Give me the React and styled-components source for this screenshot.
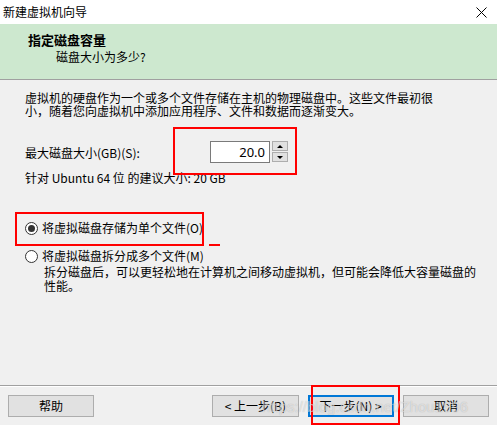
import React from 'react';
import styled, { createGlobalStyle } from 'styled-components';

const GlobalStyle = createGlobalStyle`
  html, body {
    margin: 0;
    padding: 0;
    background: #f0f0f0;
  }
  body {
    font-family: "Noto Sans CJK SC", "Liberation Sans", sans-serif;
    font-size: 12px;
    color: #000;
  }
`;

const Window = styled.div`
  position: relative;
  width: 497px;
  height: 425px;
  display: flex;
  flex-direction: column;
  background: #f0f0f0;
  overflow: hidden;
`;

const TitleBar = styled.div`
  height: 24px;
  flex: none;
  display: flex;
  align-items: center;
  justify-content: space-between;
  padding: 0 10px 0 3px;
  background: #fff;
  line-height: 24px;
`;

const Header = styled.div`
  height: 56px;
  flex: none;
  background: #cde8cf;
  border-bottom: 1px solid #a0a0a0;
  padding: 9px 0 0 28px;
  box-sizing: border-box;
`;

const HeaderTitle = styled.div`
  font-weight: bold;
  font-size: 13px;
  line-height: 13px;
`;

const HeaderSub = styled.div`
  margin: 4px 0 0 28px;
  line-height: 13px;
`;

const Body = styled.div`
  flex: 1;
  padding: 11px 0 0 25px;
`;

const Line = styled.div`
  line-height: ${p => p.$lh || 13}px;
  white-space: nowrap;
`;

const SizeRow = styled.div`
  display: flex;
  align-items: center;
  margin-top: 24px;
  height: 22px;
`;

const Label = styled.span`
  width: 185px;
  line-height: 13px;
`;

const Spin = styled.div`
  display: flex;
  height: 22px;
`;

const NumBox = styled.div`
  width: 60px;
  box-sizing: border-box;
  border: 1px solid #7a7a7a;
  background: #fff;
  text-align: right;
  padding-right: 4px;
  font-size: 13px;
  line-height: 20px;
  font-family: "Noto Sans", "Liberation Sans", sans-serif;
`;

const Arrows = styled.div`
  display: flex;
  flex-direction: column;
  gap: 1px;
  margin-left: 2px;
`;

const Arrow = styled.div`
  width: 16px;
  height: 10px;
  box-sizing: border-box;
  border: 1px solid #adadad;
  background: #e1e1e1;
  display: flex;
  align-items: center;
  justify-content: center;
`;

const Tri = styled.div`
  width: 0;
  height: 0;
  border-left: 3px solid transparent;
  border-right: 3px solid transparent;
  ${p => (p.$up ? 'border-bottom: 3px solid #000;' : 'border-top: 3px solid #000;')}
`;

const Hint = styled(Line)`
  margin-top: 8px;
`;

const RadioRow = styled.div`
  display: flex;
  align-items: center;
  gap: 4px;
  height: 16px;
  margin-top: ${p => p.$mt}px;
  line-height: 16px;
`;

const RadioDot = styled.span`
  width: 13px;
  height: 13px;
  box-sizing: border-box;
  border-radius: 50%;
  border: 1px solid #333;
  background: #fff;
  display: flex;
  align-items: center;
  justify-content: center;
  &::after {
    content: '';
    width: 7px;
    height: 7px;
    border-radius: 50%;
    background: ${p => (p.$checked ? '#333' : 'transparent')};
  }
`;

const Desc = styled.div`
  margin: 1px 0 0 19px;
`;

const Footer = styled.div`
  flex: none;
  height: 40px;
  box-sizing: border-box;
  border-top: 1px solid #a0a0a0;
  box-shadow: inset 0 1px 0 #fff;
  padding: 9px 8px 0;
  display: flex;
`;

const Button = styled.div`
  width: 87px;
  height: 22px;
  box-sizing: border-box;
  border: ${p => (p.$primary ? '2px solid #0078d7' : '1px solid #adadad')};
  background: #e1e1e1;
  display: flex;
  align-items: center;
  justify-content: center;
  line-height: 12px;
  margin-left: ${p => p.$ml || 0}px;
`;

const Mark = styled.div`
  position: absolute;
  left: ${p => p.$x}px;
  top: ${p => p.$y}px;
  width: ${p => p.$w}px;
  height: ${p => p.$h}px;
  box-sizing: border-box;
  border: 2px solid #ff0000;
  pointer-events: none;
`;

const Dash = styled.div`
  position: absolute;
  left: 209px;
  top: 244px;
  width: 11px;
  height: 2px;
  background: #ff0000;
`;

const Watermark = styled.div`
  position: absolute;
  left: 262px;
  top: 398px;
  font-family: "Liberation Sans", sans-serif;
  font-size: 15px;
  color: rgba(255, 255, 255, 0.55);
  text-shadow: 0 0 1px rgba(0, 0, 0, 0.25);
  white-space: nowrap;
  pointer-events: none;
`;

export default function App() {
  return (
    <Window>
      <GlobalStyle />
      <TitleBar>
        <span>新建虚拟机向导</span>
        <svg width="11" height="11" viewBox="0 0 11 11">
          <path d="M0.5 0.5 L10.5 10.5 M10.5 0.5 L0.5 10.5" stroke="#000" strokeWidth="1" />
        </svg>
      </TitleBar>
      <Header>
        <HeaderTitle>指定磁盘容量</HeaderTitle>
        <HeaderSub>磁盘大小为多少?</HeaderSub>
      </Header>
      <Body>
        <Line>虚拟机的硬盘作为一个或多个文件存储在主机的物理磁盘中。这些文件最初很</Line>
        <Line>小，随着您向虚拟机中添加应用程序、文件和数据而逐渐变大。</Line>
        <SizeRow>
          <Label>最大磁盘大小(GB)(S):</Label>
          <Spin>
            <NumBox>20.0</NumBox>
            <Arrows>
              <Arrow><Tri $up /></Arrow>
              <Arrow><Tri /></Arrow>
            </Arrows>
          </Spin>
        </SizeRow>
        <Hint>针对 Ubuntu 64 位 的建议大小: 20 GB</Hint>
        <RadioRow $mt={36}>
          <RadioDot $checked />
          <span>将虚拟磁盘存储为单个文件(O)</span>
        </RadioRow>
        <RadioRow $mt={12}>
          <RadioDot />
          <span>将虚拟磁盘拆分成多个文件(M)</span>
        </RadioRow>
        <Desc>
          <Line $lh={14}>拆分磁盘后，可以更轻松地在计算机之间移动虚拟机，但可能会降低大容量磁盘的</Line>
          <Line $lh={14}>性能。</Line>
        </Desc>
      </Body>
      <Footer>
        <Button>帮助</Button>
        <Button $ml={118}>&lt; 上一步(B)</Button>
        <Button $ml={9} $primary>下一步(N) &gt;</Button>
        <Button $ml={9}>取消</Button>
      </Footer>
      <Mark $x={173} $y={127} $w={124} $h={48} />
      <Mark $x={15} $y={212} $w={189} $h={34} />
      <Dash />
      <Mark $x={311} $y={385} $w={89} $h={40} />
      <Watermark>https://blog.csdn.net/Zhou1996</Watermark>
    </Window>
  );
}
